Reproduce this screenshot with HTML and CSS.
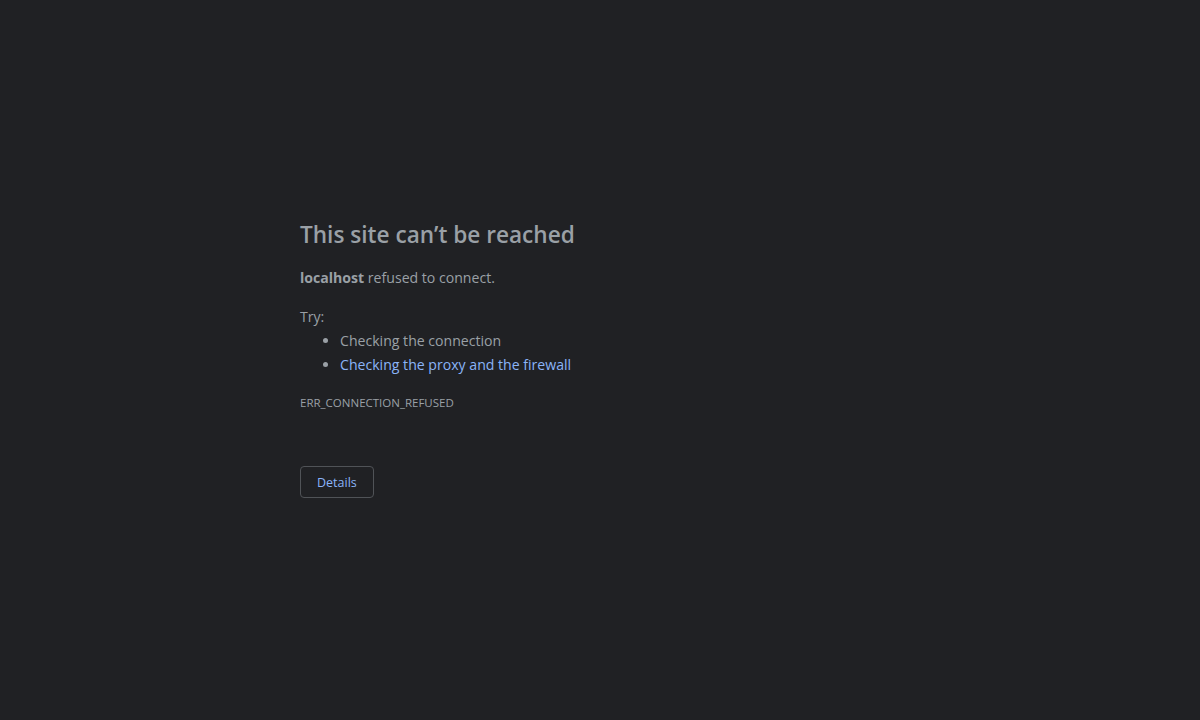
FILE: index.html
```html
<!DOCTYPE html>
<html lang="en">
<head>
<meta charset="utf-8">
<title>localhost</title>
<link rel="stylesheet" href="styles.css">
</head>
<body>
<div class="page">
  <div class="main">
    <h1 class="title">This site can’t be reached</h1>
    <p class="summary"><strong>localhost</strong> refused to connect.</p>
    <div class="suggestions">
      <p class="try">Try:</p>
      <ul class="list">
        <li>Checking the connection</li>
        <li><a class="link" href="#">Checking the proxy and the firewall</a></li>
      </ul>
    </div>
    <div class="code">ERR_CONNECTION_REFUSED</div>
  </div>
  <div class="buttons">
    <button class="details">Details</button>
  </div>
</div>
</body>
</html>
```
FILE: styles.css
```css
html, body {
  margin: 0;
  padding: 0;
  background: #202124;
  height: 100%;
}
body {
  font-family: "Open Sans", "Noto Sans", sans-serif;
  font-size: 14.1px;
  color: #9aa0a6;
}
.page {
  width: 600px;
  margin: 0 auto;
  padding-top: 220px;
}
.title {
  margin: 0 0 16px;
  font-size: 22.6px;
  line-height: 30px;
  font-weight: 600;
  color: #9aa0a6;
}
.summary {
  margin: 0;
  line-height: 24px;
}
.summary strong {
  font-weight: 700;
}
.suggestions {
  margin-top: 15px;
}
.try {
  margin: 0;
  line-height: 24px;
}
.list {
  margin: 0;
  padding-left: 40px;
}
.list li {
  line-height: 24px;
}
.link {
  color: #8ab4f8;
  text-decoration: none;
}
.code {
  margin-top: 16px;
  font-size: 11.5px;
  line-height: 20px;
  color: #9aa0a6;
}
.buttons {
  margin-top: 53px;
}
.details {
  font-family: inherit;
  height: 32px;
  padding: 0 16px;
  font-size: 12.5px;
  background: transparent;
  color: #8ab4f8;
  border: 1px solid #505357;
  border-radius: 4px;
}
```
